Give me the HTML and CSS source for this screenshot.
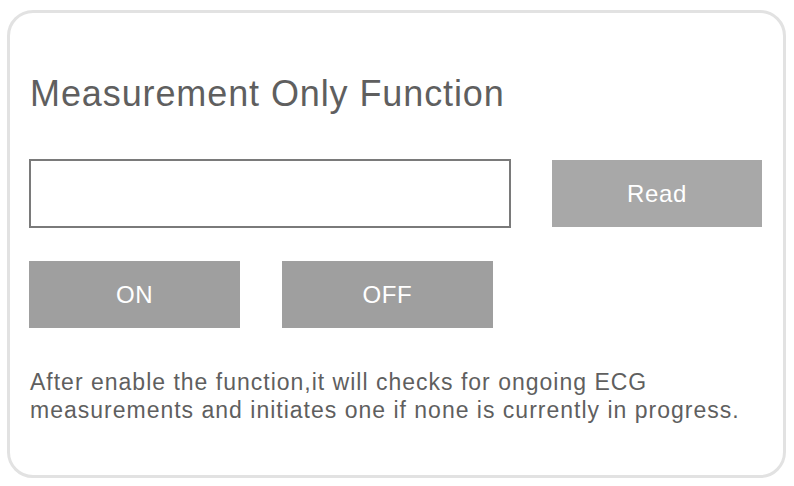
FILE: index.html
```html
<!DOCTYPE html>
<html lang="en">
<head>
  <meta charset="UTF-8">
  <meta name="viewport" content="width=device-width, initial-scale=1.0">
  <title>Measurement Only Function</title>
  <link rel="stylesheet" href="styles.css">
</head>
<body>

<div class="card">
  <h2 class="title">Measurement Only Function</h2>

  <div class="row row-read">
    <input type="text" class="value-box" id="measureValue">
    <button class="btn btn-read">Read</button>
  </div>

  <div class="row">
    <button class="btn">ON</button>
    <button class="btn">OFF</button>
  </div>

  <p class="note">After enable the function,it will checks for ongoing ECG measurements and initiates one if none is currently in progress.</p>
</div>

</body>
</html>
```

FILE: styles.css
```css
body {
  margin: 0;
  background: #ffffff;
  font-family: "Liberation Sans", Arial, sans-serif;
}

.card {
  box-sizing: border-box;
  width: 779px;
  height: 468px;
  margin: 10px 0 0 7px;
  padding: 0 19px;
  border: 3px solid #e2e2e2;
  border-radius: 26px;
  background: #ffffff;
}

.title {
  margin: 60px 0 0 1px;
  font-size: 36px;
  font-weight: normal;
  line-height: 42px;
  letter-spacing: 0.9px;
  color: #5f5f5f;
}

.row {
  display: flex;
  gap: 42px;
  margin-top: 33px;
}

.row-read {
  gap: 41px;
  margin-top: 44px;
}

.value-box {
  box-sizing: border-box;
  width: 482px;
  height: 69px;
  margin: 0;
  border: 2px solid #7a7a7a;
  background: #ffffff;
}

.btn {
  width: 211px;
  height: 67px;
  margin: 0;
  padding: 0;
  border: none;
  background: #9f9f9f;
  color: #ffffff;
  font-family: "Liberation Sans", Arial, sans-serif;
  font-size: 24px;
  letter-spacing: 0.6px;
}

.btn-read {
  width: 210px;
  margin-top: 1px;
  background: #a8a8a8;
}

.note {
  width: 720px;
  margin: 40px 0 0 1px;
  font-size: 23px;
  line-height: 28px;
  letter-spacing: 1px;
  color: #5f5f5f;
}
```
